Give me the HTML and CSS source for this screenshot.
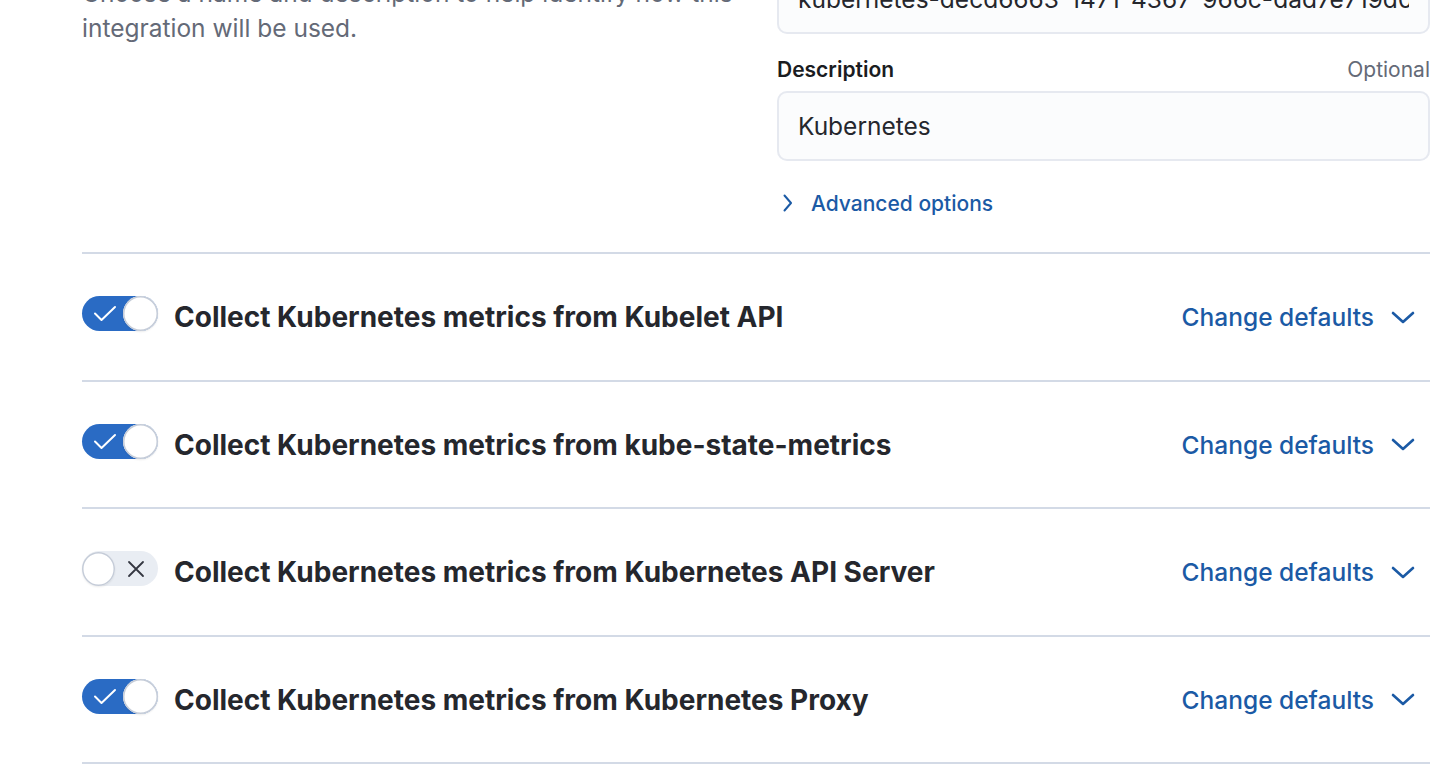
FILE: index.html
```html
<!DOCTYPE html>
<html lang="en">
<head>
<meta charset="utf-8">
<title>Integration settings</title>
<link rel="stylesheet" href="styles.css">
</head>
<body>
<main class="page">
  <section class="described">
    <div class="described-left">
      <p class="help">Choose a name and description to help identify how this<br>integration will be used.</p>
    </div>
    <div class="described-right">
      <div class="field field-name"><span class="field-value">kubernetes-decd6663-1471-4367-966c-dad7e719d0c6</span></div>
      <div class="label-row">
        <span class="label">Description</span>
        <span class="label-opt">Optional</span>
      </div>
      <div class="field"><span class="field-value">Kubernetes</span></div>
      <button class="adv" type="button">
        <svg class="adv-icon" width="12" height="20" viewBox="0 0 12 20"><polyline points="2.5,2.5 9,10 2.5,17.5" fill="none" stroke="#1b5aa5" stroke-width="2" stroke-linecap="round" stroke-linejoin="round"/></svg>
        <span>Advanced options</span>
      </button>
    </div>
  </section>

  <section class="inputs">
    <div class="input-row">
      <span class="switch on"><svg class="sw-check" width="24" height="17" viewBox="0 0 24 17"><polyline points="2,8.5 8.5,15 22,2" fill="none" stroke="#fff" stroke-width="2" stroke-linecap="round" stroke-linejoin="round"/></svg><span class="thumb"></span></span>
      <h3 class="input-title">Collect Kubernetes metrics from Kubelet API</h3>
      <button class="change" type="button"><span>Change defaults</span><svg width="24" height="13" viewBox="0 0 24 13"><polyline points="2,2 12,11 22,2" fill="none" stroke="#1b5aa5" stroke-width="2.6" stroke-linecap="round" stroke-linejoin="round"/></svg></button>
    </div>
    <div class="input-row">
      <span class="switch on"><svg class="sw-check" width="24" height="17" viewBox="0 0 24 17"><polyline points="2,8.5 8.5,15 22,2" fill="none" stroke="#fff" stroke-width="2" stroke-linecap="round" stroke-linejoin="round"/></svg><span class="thumb"></span></span>
      <h3 class="input-title">Collect Kubernetes metrics from kube-state-metrics</h3>
      <button class="change" type="button"><span>Change defaults</span><svg width="24" height="13" viewBox="0 0 24 13"><polyline points="2,2 12,11 22,2" fill="none" stroke="#1b5aa5" stroke-width="2.6" stroke-linecap="round" stroke-linejoin="round"/></svg></button>
    </div>
    <div class="input-row">
      <span class="switch off"><span class="thumb"></span><svg class="sw-x" width="18" height="18" viewBox="0 0 18 18"><path d="M2 2 L16 16 M16 2 L2 16" fill="none" stroke="#343741" stroke-width="1.8" stroke-linecap="round"/></svg></span>
      <h3 class="input-title">Collect Kubernetes metrics from Kubernetes API Server</h3>
      <button class="change" type="button"><span>Change defaults</span><svg width="24" height="13" viewBox="0 0 24 13"><polyline points="2,2 12,11 22,2" fill="none" stroke="#1b5aa5" stroke-width="2.6" stroke-linecap="round" stroke-linejoin="round"/></svg></button>
    </div>
    <div class="input-row">
      <span class="switch on"><svg class="sw-check" width="24" height="17" viewBox="0 0 24 17"><polyline points="2,8.5 8.5,15 22,2" fill="none" stroke="#fff" stroke-width="2" stroke-linecap="round" stroke-linejoin="round"/></svg><span class="thumb"></span></span>
      <h3 class="input-title">Collect Kubernetes metrics from Kubernetes Proxy</h3>
      <button class="change" type="button"><span>Change defaults</span><svg width="24" height="13" viewBox="0 0 24 13"><polyline points="2,2 12,11 22,2" fill="none" stroke="#1b5aa5" stroke-width="2.6" stroke-linecap="round" stroke-linejoin="round"/></svg></button>
    </div>
  </section>
</main>
</body>
</html>
```

FILE: styles.css
```css
* { box-sizing: border-box; }
html, body { margin: 0; padding: 0; background: #fff; }
body {
  font-family: Inter, "Noto Sans", "Liberation Sans", sans-serif;
  color: #25272d;
  overflow: hidden;
  height: 773px;
}
.page {
  padding: 0 25px 0 82px;
}
.described {
  display: grid;
  grid-template-columns: minmax(0, 1fr) minmax(0, 1fr);
  column-gap: 42px;
  margin-top: -36px;
  padding-bottom: 28px;
}
.described-left { padding-top: 12px; }
.help {
  margin: 0;
  font-size: 24.5px;
  line-height: 35px;
  color: #646a77;
  white-space: nowrap;
}
.field {
  height: 70px;
  background: #fbfcfd;
  border-radius: 10px;
  box-shadow: inset 0 0 0 2px #e6e9f0;
  padding: 0 21px;
  display: flex;
  align-items: center;
}
.field-value {
  display: block;
  width: 100%;
  overflow: hidden;
  white-space: nowrap;
  font-size: 24.5px;
  line-height: 35px;
  color: #25272d;
}
.label-row {
  display: flex;
  justify-content: space-between;
  align-items: baseline;
  margin-top: 22px;
  margin-bottom: 7px;
  line-height: 28px;
}
.label {
  font-size: 21px;
  font-weight: 600;
  color: #1a1c21;
}
.label-opt {
  font-size: 21px;
  color: #646a77;
}
.adv {
  display: flex;
  align-items: center;
  gap: 17px;
  margin-top: 21px;
  padding: 0 0 0 5px;
  height: 42px;
  border: 0;
  background: none;
  font-family: inherit;
  font-size: 21px;
  font-weight: 500;
  color: #1b5aa5;
  cursor: pointer;
}
.adv-icon { flex: none; }

.inputs {
  border-bottom: 2px solid #d3dae6;
}
.input-row {
  display: flex;
  align-items: flex-start;
  gap: 16px;
  border-top: 2px solid #d3dae6;
  padding: 42px 0 41.5px;
}
.switch {
  flex: none;
  width: 76px;
  height: 35px;
  margin-top: 0;
  border-radius: 18px;
  display: flex;
  align-items: center;
  justify-content: space-between;
}
.switch.on {
  background: #2a6bc4;
  padding: 0 0 0 11px;
}
.switch.off {
  background: #e9edf3;
  padding: 0 13px 0 0;
}
.thumb {
  width: 35px;
  height: 35px;
  border-radius: 50%;
  background: #fff;
  box-shadow: inset 0 0 0 1.5px #c5ccd8, 0 1px 2px rgba(0,0,0,0.08);
}
.switch.off .thumb { width: 33px; height: 34px; }
.sw-check { display: block; }
.sw-x { display: block; }
.input-title {
  margin: 0;
  font-size: 28px;
  line-height: 42px;
  font-weight: 700;
  color: #25272d;
  white-space: nowrap;
}
.change {
  margin-left: auto;
  display: flex;
  align-items: center;
  gap: 17px;
  height: 42px;
  padding: 0 15px 0 0;
  border: 0;
  background: none;
  font-family: inherit;
  font-size: 24.5px;
  font-weight: 500;
  color: #1b5aa5;
  cursor: pointer;
}
.change svg { display: block; }
```
